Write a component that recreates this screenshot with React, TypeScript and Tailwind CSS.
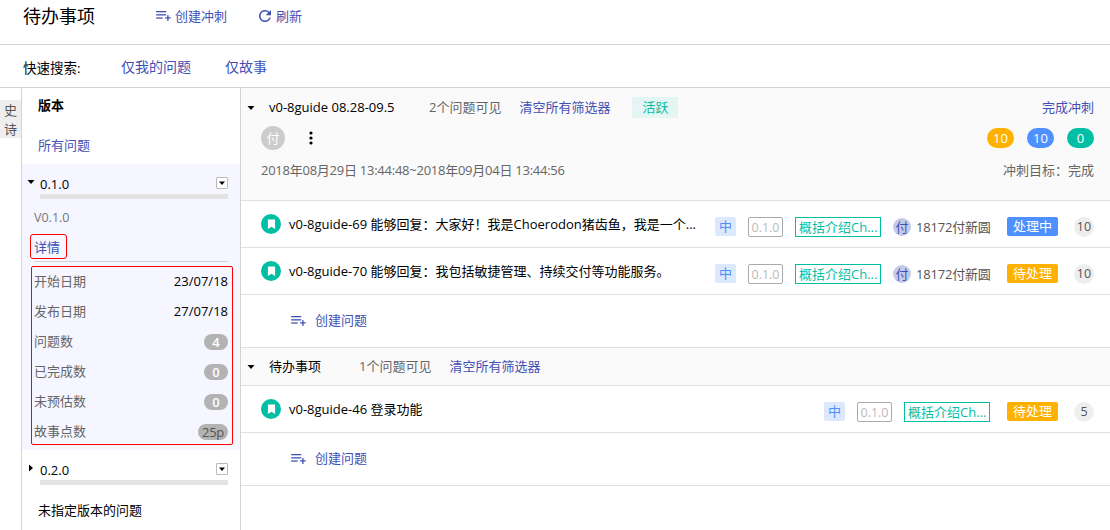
const fontStack = '"Open Sans", "Noto Sans CJK SC", sans-serif';

const CreateIcon = ({ className = '' }: { className?: string }) => (
  <svg viewBox="0 0 16 12" className={`w-[15px] h-[11px] ${className}`} fill="#3f51b5">
    <rect x="0" y="0" width="11" height="1.4" />
    <rect x="0" y="3.5" width="11" height="1.4" />
    <rect x="0" y="7" width="7" height="1.4" />
    <rect x="9.8" y="6.8" width="6" height="1.4" />
    <rect x="12.1" y="4.5" width="1.4" height="6.4" />
  </svg>
);

const Caret = ({ right = false }: { right?: boolean }) => (
  <svg viewBox="0 0 8 8" className="w-2 h-2 shrink-0" fill="#000">
    {right ? <path d="M2 0.5 L6 4 L2 7.5 Z" /> : <path d="M0.5 2 H7.5 L4 6 Z" />}
  </svg>
);

const StoryIcon = () => (
  <span className="w-5 h-5 rounded-full bg-[#00bfa5] flex items-center justify-center shrink-0">
    <svg viewBox="0 0 10 12" className="w-[9px] h-[11px]" fill="#fff">
      <path d="M1 0.5 H9 V11 L5 8.6 L1 11 Z" />
    </svg>
  </span>
);

const Tags = ({ status, points, assignee = true }: { status: string; points: string; assignee?: boolean }) => (
  <div className="flex items-center ml-auto mt-[5px]">
    <span className="w-[21px] h-[19px] rounded-[2px] bg-[#dce9fd] text-[#4d90fe] text-[13px] leading-[19px] text-center">中</span>
    <span className="w-[35px] h-5 ml-3 border border-[#aaa] rounded-[2px] text-[#bbb] text-[12.5px] leading-[19px] text-center">0.1.0</span>
    <span className="w-[86px] h-5 ml-3 border border-[#00bfa5] text-[#00bfa5] text-[13px] leading-[18px] pl-[3px] whitespace-nowrap overflow-hidden">概括介绍Ch...</span>
    {assignee && (
      <>
        <span className="w-[18px] h-[18px] ml-3 rounded-full bg-[#c5cae9] text-[#3f51b5] text-[13px] leading-[18px] text-center">付</span>
        <span className="w-[74px] ml-[5px] text-[13px] leading-[18px] tracking-[-0.2px] text-[#555] whitespace-nowrap">18172付新圆</span>
      </>
    )}
    <span className={`w-[51px] h-[19px] ml-[17px] rounded-[2px] text-white text-[13px] leading-[19px] text-center ${status === '处理中' ? 'bg-[#4d90fe]' : 'bg-[#ffb100]'}`}>{status}</span>
    <span className="w-5 h-5 ml-4 rounded-full bg-[#eee] text-[#555] text-[12.5px] leading-5 text-center">{points}</span>
  </div>
);

const IssueRow = ({ id, title, status, points, assignee = true }: { id: string; title: string; status: string; points: string; assignee?: boolean }) => (
  <div className="h-[47px] border-b border-[#e0e0e0] flex items-center pl-5 pr-[16px]">
    <StoryIcon />
    <span className="ml-2 pt-[1px] text-[13px] text-black whitespace-nowrap">{id} {title}</span>
    <Tags status={status} points={points} assignee={assignee} />
  </div>
);

const CreateIssue = () => (
  <div className="h-[53px] border-b border-[#e0e0e0] flex items-center pl-[50px]">
    <CreateIcon />
    <span className="ml-[9px] text-[13px] text-[#3f51b5]">创建问题</span>
  </div>
);

const Stat = ({ label, value, badge = false }: { label: string; value: string; badge?: boolean }) => (
  <div className="h-[30px] flex items-center justify-between pr-[4px]">
    <span className="text-[13px] text-[#666]">{label}</span>
    {badge ? (
      <span className={`min-w-6 h-4 px-[4px] rounded-full bg-[#b3b3b3] text-[13px] leading-4 text-center ${value === '25p' ? 'text-[#555] tracking-[-0.3px]' : 'text-white font-semibold'}`}>{value}</span>
    ) : (
      <span className="text-[13px] text-black">{value}</span>
    )}
  </div>
);

const VersionHead = ({ name, right = false }: { name: string; right?: boolean }) => (
  <div className="pl-[5px] pr-[12px]">
    <div className="flex items-center">
      <div className="-mt-[7px]"><Caret right={right} /></div>
      <span className="ml-[5px] pb-[2px] text-[13px] text-black leading-[16px]">{name}</span>
      <span className="ml-auto w-3 h-3 border border-[#bbb] rounded-[1px] bg-white flex items-center justify-center -mt-[5px]">
        <svg viewBox="0 0 8 8" className="w-2 h-2" fill="#000"><path d="M1 2.5 H7 L4 6 Z" /></svg>
      </span>
    </div>
    <div className="ml-[13px] h-[5px] bg-[#e3e3e3]" />
  </div>
);

export default function App() {
  return (
    <div className="w-[1110px] h-[530px] overflow-hidden bg-white flex flex-col" style={{ fontFamily: fontStack }}>
      <div className="h-[45px] shrink-0 border-b border-[#d3d3d3] flex items-start pl-[23px]">
        <span className="text-[18px] leading-[32px] text-black">待办事项</span>
        <span className="ml-[61px] mt-[7px] flex items-center text-[13px] leading-[18px] text-[#3f51b5]">
          <CreateIcon />
          <span className="ml-[4px]">创建冲刺</span>
        </span>
        <span className="ml-[29px] mt-[7px] flex items-center text-[13px] leading-[18px] text-[#3f51b5]">
          <svg viewBox="0 0 24 24" className="w-[18px] h-[18px]" fill="#3f51b5">
            <path d="M17.65 6.35A7.958 7.958 0 0 0 12 4c-4.42 0-7.99 3.58-7.99 8s3.57 8 7.99 8c3.73 0 6.84-2.55 7.73-6h-2.08A5.99 5.99 0 0 1 12 18c-3.31 0-6-2.69-6-6s2.69-6 6-6c1.66 0 3.14.69 4.22 1.78L13 11h7V4l-2.35 2.35z" />
          </svg>
          <span className="ml-[2px]">刷新</span>
        </span>
      </div>

      <div className="h-[43px] shrink-0 border-b border-[#d3d3d3] flex items-center pl-[23px]">
        <span className="w-[98px] text-[13.5px] text-black relative top-[2px]">快速搜索:</span>
        <span className="text-[14px] text-[#3f51b5]">仅我的问题</span>
        <span className="ml-[34px] text-[14px] text-[#3f51b5]">仅故事</span>
      </div>

      <div className="flex-1 flex min-h-0">
        <div className="w-[22px] shrink-0 border-r border-[#d3d3d3] pt-3">
          <div className="w-[21px] h-[38px] bg-[#eee] pt-[1px] text-[13px] leading-[19px] text-[#555] text-center">史<br />诗</div>
        </div>

        <div className="w-[219px] shrink-0 border-r border-[#d3d3d3] flex flex-col">
          <div className="pl-4 pt-[8px] text-[13px] leading-[18px] font-bold text-black">版本</div>
          <div className="pl-4 mt-[22px] text-[13px] leading-[18px] text-[#3f51b5]">所有问题</div>
          <div className="mt-[10px] h-[286px] bg-[#f5f6ff] pt-[12px]">
            <VersionHead name="0.1.0" />
            <div className="ml-3 mt-[10px] text-[12.5px] leading-[18px] text-[#777]">V0.1.0</div>
            <div className="relative mt-[11px] ml-3 mr-3 h-[24px] border-b border-[#d3d3d3]">
              <span className="absolute -left-[4px] -top-[4px] w-[37px] h-[25px] border border-[#f00] rounded-[3px] pl-[3px] text-[13px] leading-[25px] text-[#3f51b5]">详情</span>
            </div>
            <div className="ml-[9px] mr-[7px] mt-[4px] h-[179px] border border-[#f00] rounded-[2px] pl-[2px]">
              <Stat label="开始日期" value="23/07/18" />
              <Stat label="发布日期" value="27/07/18" />
              <Stat label="问题数" value="4" badge />
              <Stat label="已完成数" value="0" badge />
              <Stat label="未预估数" value="0" badge />
              <Stat label="故事点数" value="25p" badge />
            </div>
          </div>
          <div className="mt-[12px]"><VersionHead name="0.2.0" right /></div>
          <div className="pl-4 mt-[16px] text-[13px] leading-[18px] text-black">未指定版本的问题</div>
        </div>

        <div className="flex-1 min-w-0 flex flex-col">
          <div className="h-[113px] shrink-0 border-b border-[#e0e0e0] bg-[#fafafa] pl-[20px] pr-[16px] pt-[9px]">
            <div className="flex items-center h-[21px] text-[13px]">
              <div className="-ml-[14px]"><Caret /></div>
              <span className="ml-[14px] w-[122px] text-black whitespace-nowrap">v0-8guide 08.28-09.5</span>
              <span className="ml-[38px] text-[#666]">2个问题可见</span>
              <span className="ml-[18px] text-[#3f51b5]">清空所有筛选器</span>
              <span className="ml-[22px] w-[46px] h-[21px] bg-[#e5f5f3] text-[#00bfa5] leading-[21px] text-center">活跃</span>
              <span className="ml-auto text-[#3f51b5]">完成冲刺</span>
            </div>
            <div className="flex items-center h-6 mt-[8px]">
              <span className="w-6 h-6 rounded-full bg-[#ccc] text-white text-[13px] leading-6 text-center">付</span>
              <svg viewBox="0 0 4 14" className="ml-[24px] w-1 h-[14px]" fill="#000">
                <circle cx="2" cy="2" r="1.6" /><circle cx="2" cy="7" r="1.6" /><circle cx="2" cy="12" r="1.6" />
              </svg>
              <span className="ml-auto w-[27px] h-5 rounded-full bg-[#ffb100] text-white text-[13px] leading-5 text-center">10</span>
              <span className="ml-[13px] w-[27px] h-5 rounded-full bg-[#4d90fe] text-white text-[13px] leading-5 text-center">10</span>
              <span className="ml-[13px] w-[27px] h-5 rounded-full bg-[#00bfa5] text-white text-[13px] leading-5 text-center">0</span>
            </div>
            <div className="flex items-center justify-between mt-[11px] text-[13px] text-[#666]">
              <span className="tracking-[-0.25px]">2018年08月29日 13:44:48~2018年09月04日 13:44:56</span>
              <span>冲刺目标：完成</span>
            </div>
          </div>

          <IssueRow id="v0-8guide-69" title="能够回复：大家好！我是Choerodon猪齿鱼，我是一个..." status="处理中" points="10" />
          <IssueRow id="v0-8guide-70" title="能够回复：我包括敏捷管理、持续交付等功能服务。" status="待处理" points="10" />
          <CreateIssue />

          <div className="h-[38px] shrink-0 border-b border-[#e0e0e0] bg-[#fafafa] flex items-center pl-[6px] text-[13px]">
            <Caret />
            <span className="ml-[14px] text-black">待办事项</span>
            <span className="ml-[38px] text-[#666]">1个问题可见</span>
            <span className="ml-[18px] text-[#3f51b5]">清空所有筛选器</span>
          </div>

          <IssueRow id="v0-8guide-46" title="登录功能" status="待处理" points="5" assignee={false} />
          <CreateIssue />
        </div>
      </div>
    </div>
  );
}
